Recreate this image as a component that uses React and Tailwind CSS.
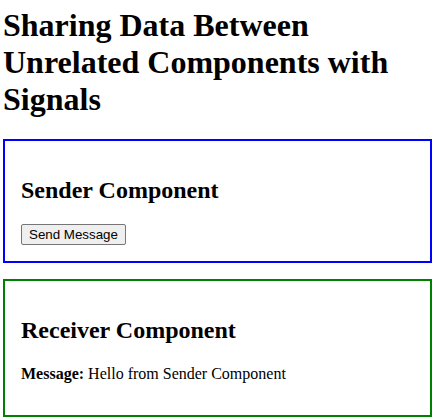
const App = () => {
  return (
    <div className="pt-[7px] pl-[3px] w-[432px] font-['Liberation_Serif',serif] text-black bg-white">
      <h1 className="text-[32px] font-bold leading-[36.8px] mb-[21.44px]">
        Sharing Data Between Unrelated Components with Signals
      </h1>

      <div className="border-2 border-[#0000ff] p-4">
        <h2 className="text-[24px] font-bold leading-[27.6px] mt-[20px] mb-[20px]">Sender Component</h2>
        <button className="block font-['Liberation_Sans',Arial,sans-serif] text-[13.33px] leading-[15px] px-[7px] py-[2px] border border-[#767676] bg-[#efefef] rounded-[2px] text-black">
          Send Message
        </button>
      </div>

      <div className="mt-4 border-2 border-[#008000] p-4">
        <h2 className="text-[24px] font-bold leading-[27.6px] mt-[20px] mb-[20px]">Receiver Component</h2>
        <p className="text-[16px] leading-[18px] mb-[16px]">
          <strong className="font-bold">Message:</strong> Hello from Sender Component
        </p>
      </div>
    </div>
  );
};

export default App;
